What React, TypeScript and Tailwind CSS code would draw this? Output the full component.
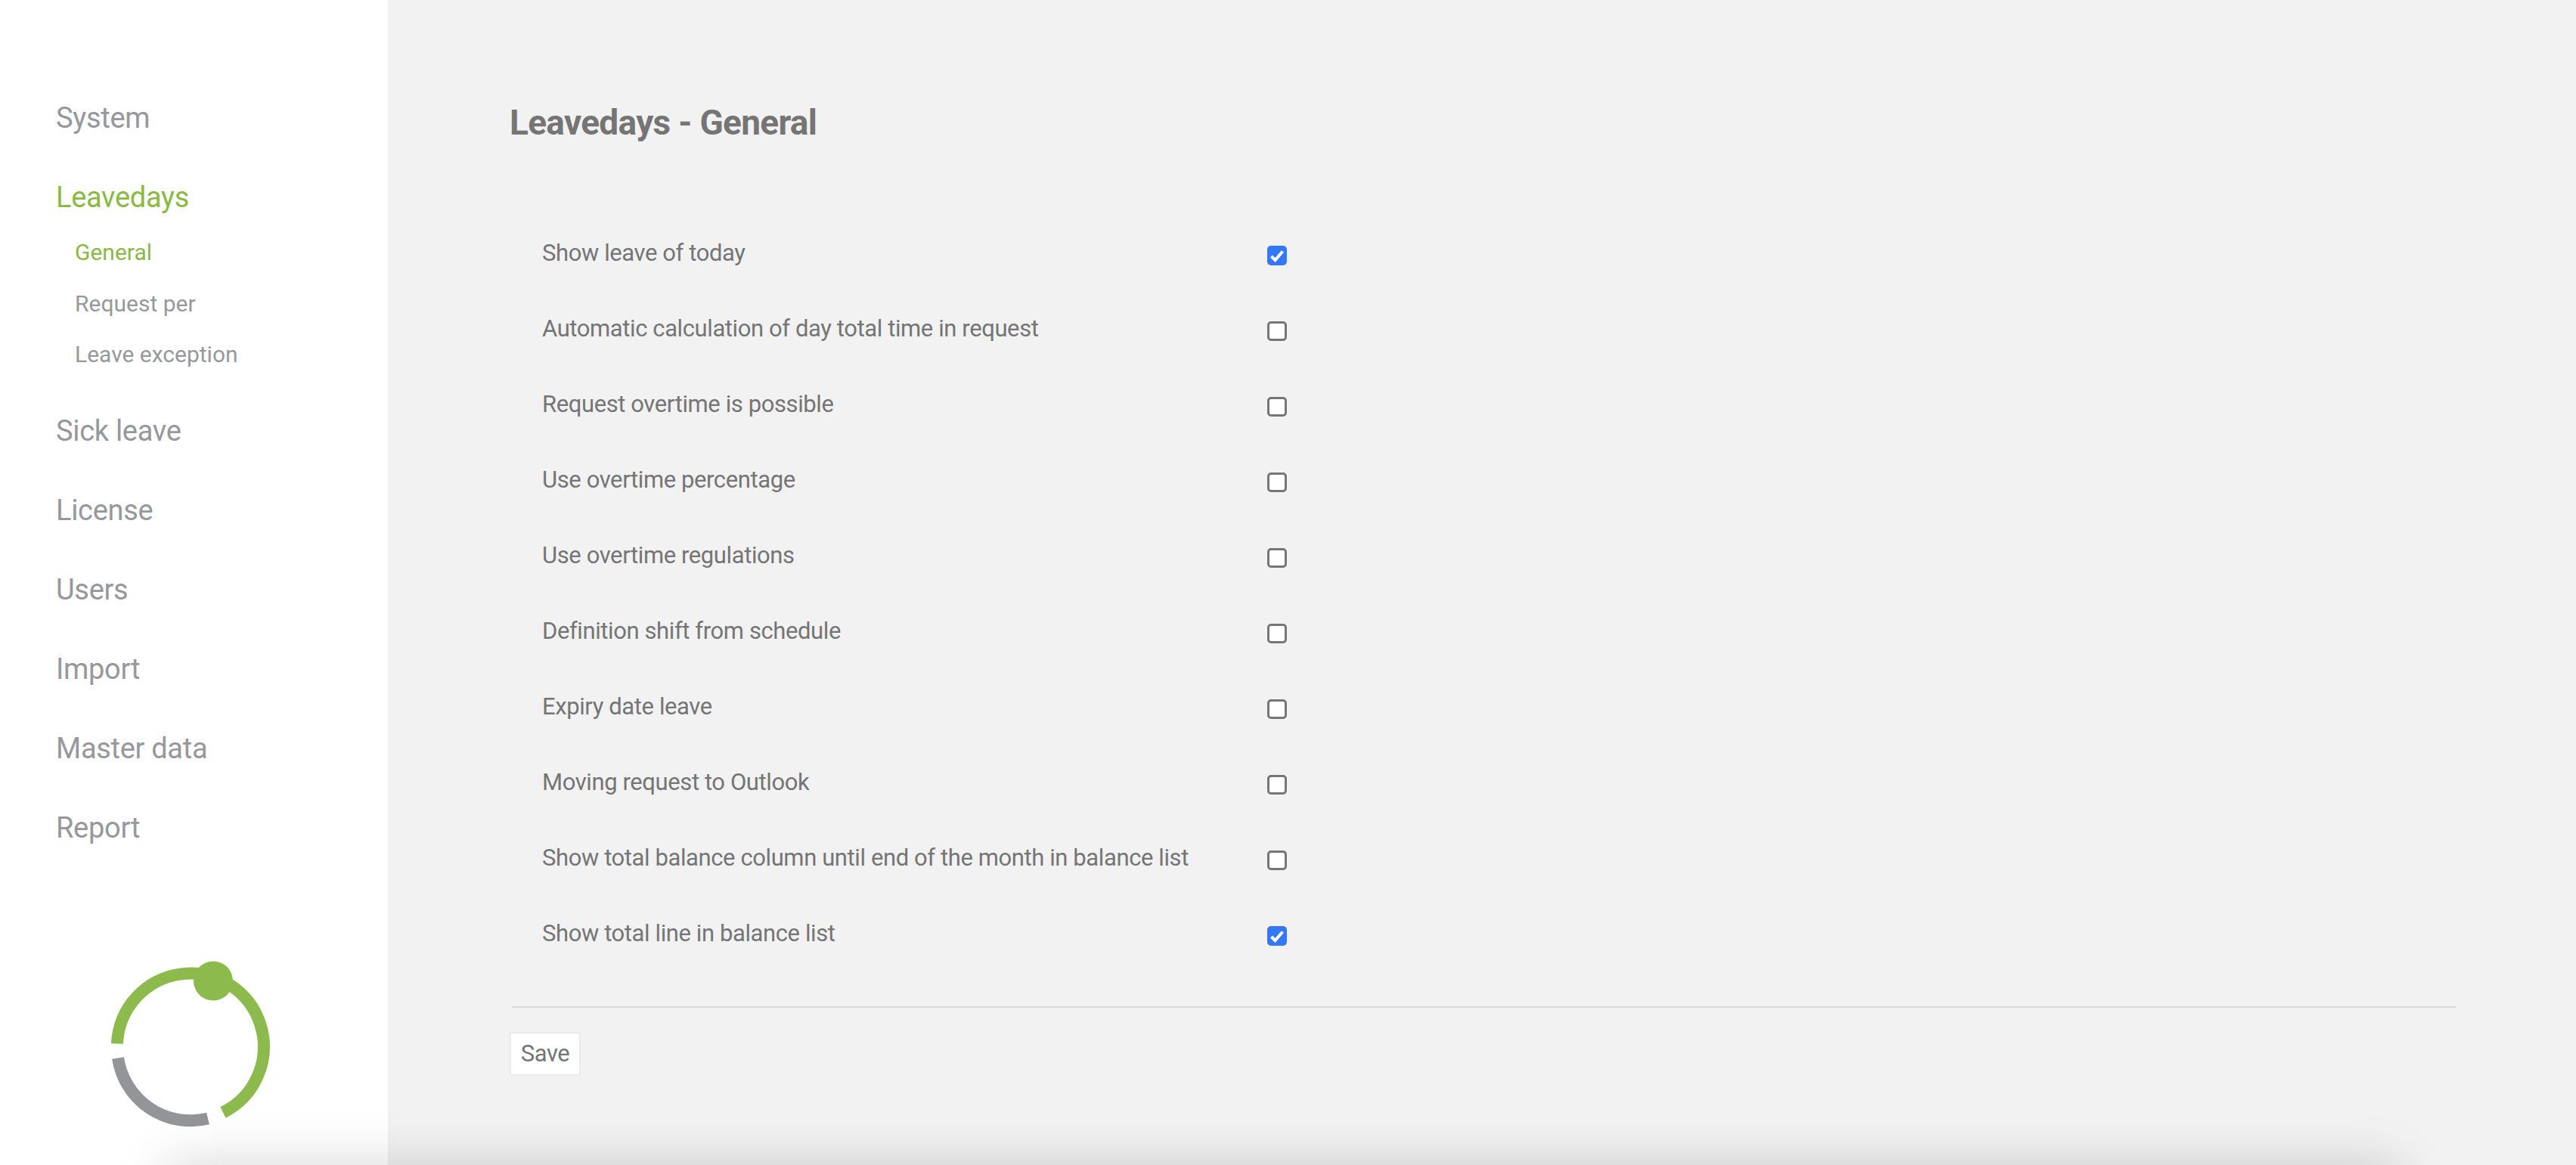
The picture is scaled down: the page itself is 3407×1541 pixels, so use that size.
const settings = [
  { label: "Show leave of today", checked: true },
  { label: "Automatic calculation of day total time in request", checked: false },
  { label: "Request overtime is possible", checked: false },
  { label: "Use overtime percentage", checked: false },
  { label: "Use overtime regulations", checked: false },
  { label: "Definition shift from schedule", checked: false },
  { label: "Expiry date leave", checked: false },
  { label: "Moving request to Outlook", checked: false },
  { label: "Show total balance column until end of the month in balance list", checked: false },
  { label: "Show total line in balance list", checked: true },
];

function NavItem({ label, active }: { label: string; active?: boolean }) {
  return (
    <a className={`flex h-[105px] items-center text-[38px] tracking-[-0.3px] ${active ? "text-[#8aba44]" : "text-[#97989c]"}`}>{label}</a>
  );
}

function SubItem({ label, active }: { label: string; active?: boolean }) {
  return (
    <a className={`flex h-[67.5px] items-center pl-[25px] text-[30px] ${active ? "text-[#8aba44]" : "text-[#97989c]"}`}>{label}</a>
  );
}

function Logo() {
  return (
    <svg width="240" height="240" viewBox="0 0 240 240" className="ml-[58px]">
      <path d="M 23 115.5 A 97 97 0 1 1 163 206.5" fill="none" stroke="#8dba4d" strokeWidth="16" />
      <circle cx="150" cy="32.5" r="26" fill="#8dba4d" />
      <path d="M 24 134.5 A 97 97 0 0 0 143 214.5" fill="none" stroke="#939598" strokeWidth="16" />
    </svg>
  );
}

function Row({ label, checked }: { label: string; checked: boolean }) {
  return (
    <label className="flex h-[100px] items-center pl-[43px]">
      <span className="mb-[6px] w-[959px] text-[31px] tracking-[-0.4px] text-[#757575]">{label}</span>
      <span className="relative flex h-[26px] w-[26px]">
        <input
          type="checkbox"
          readOnly
          checked={checked}
          className={`h-[26px] w-[26px] appearance-none rounded-[5px] ${checked ? "bg-[#3478f6]" : "border-[3px] border-[#767676] bg-white"}`}
        />
        {checked && (
          <svg viewBox="0 0 26 26" className="absolute inset-0 h-[26px] w-[26px]">
            <path d="M5.5 14 L10.5 19 L20.5 7.5" fill="none" stroke="#fff" strokeWidth="4" />
          </svg>
        )}
      </span>
    </label>
  );
}

export default function App() {
  return (
    <div className="relative flex h-[1541px] overflow-hidden bg-[#f2f2f2] font-['Roboto',sans-serif]">
      <aside className="flex w-[513px] shrink-0 flex-col bg-white pl-[74px] pt-[104px]">
        <NavItem label="System" />
        <NavItem label="Leavedays" active />
        <div className="-mt-[14px] mb-[15px]">
          <SubItem label="General" active />
          <SubItem label="Request per" />
          <SubItem label="Leave exception" />
        </div>
        <NavItem label="Sick leave" />
        <NavItem label="License" />
        <NavItem label="Users" />
        <NavItem label="Import" />
        <NavItem label="Master data" />
        <NavItem label="Report" />
        <div className="-ml-[0px] mt-[117px]">
          <Logo />
        </div>
      </aside>
      <main className="flex-1 pl-[161px] pr-[159px] pt-[132px]">
        <h1 className="text-[46px] font-bold leading-[60px] tracking-[-0.7px] text-[#757575]">Leavedays - General</h1>
        <div className="mt-[96px]">
          {settings.map((s) => (
            <Row key={s.label} label={s.label} checked={s.checked} />
          ))}
        </div>
        <div className="ml-[3px] mt-[43px] h-[2px] bg-[#d9d9d9]" />
        <button className="mt-[32px] h-[58px] w-[94px] border-2 border-[#ebebeb] bg-white text-[31px] tracking-[-0.4px] text-[#757575]">Save</button>
      </main>
      <div className="absolute bottom-[-100px] left-[220px] right-[236px] h-[100px] shadow-[0_0_70px_0_rgba(0,0,0,0.17)]" />
    </div>
  );
}
